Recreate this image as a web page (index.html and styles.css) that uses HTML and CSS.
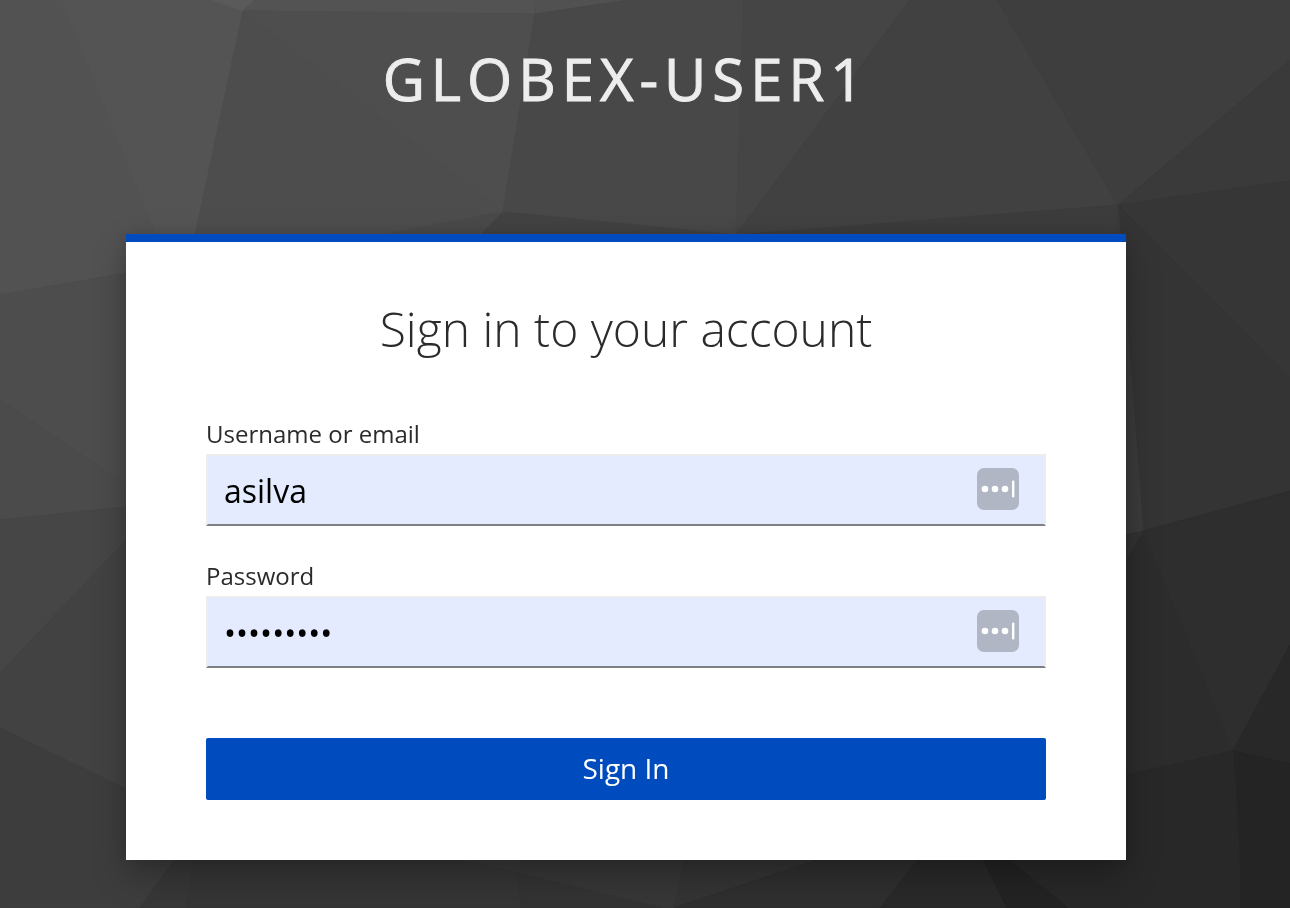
FILE: index.html
```html
<!DOCTYPE html>
<html lang="en">
<head>
<meta charset="utf-8">
<meta name="viewport" content="width=device-width, initial-scale=1">
<title>Sign in to globex-user1</title>
<link rel="stylesheet" href="styles.css">
</head>
<body>
<svg class="backdrop" viewBox="0 0 1290 908" preserveAspectRatio="xMidYMid slice" aria-hidden="true">
  <path color="#3c3c3c" d="M0 0H1290V908H0Z"/>
  <path color="#525252" d="M0 0H62L168 265L126 273L0 295Z"/>
  <path color="#545454" d="M62 0H212L243 11L195 234L190 262L168 265Z"/>
  <path color="#5a5a5a" d="M212 0H255L243 11Z"/>
  <path color="#535353" d="M255 0H534L535 14L243 11Z"/>
  <path color="#515151" d="M534 0H628L535 14Z"/>
  <path color="#4d4d4d" d="M243 11L503 212L380 235H195Z"/>
  <path color="#4e4e4e" d="M243 11L535 14L503 212Z"/>
  <path color="#484848" d="M628 0H744L736 235L503 212L535 14Z"/>
  <path color="#454545" d="M744 0H910L736 235Z"/>
  <path color="#414141" d="M910 0H997L1118 205L736 235Z"/>
  <path color="#3e3e3e" d="M997 0H1290V60L1118 205Z"/>
  <path color="#3a3a3a" d="M1290 60V181L1118 205Z"/>
  <path color="#494949" d="M503 212L475 240H380V235Z"/>
  <path color="#424242" d="M503 212L736 235V240H475Z"/>
  <path color="#3c3c3c" d="M736 235L1118 205L1121 240H736Z"/>
  <path color="#363636" d="M1118 205L1290 181V378Z"/>
  <path color="#343434" d="M1118 205L1290 378V491L1143 531Z"/>
  <path color="#3b3b3b" d="M1118 205L1143 531L1100 540Z"/>
  <path color="#2e2e2e" d="M1143 531L1290 491V645L1233 751Z"/>
  <path color="#2c2c2c" d="M1143 531L1233 751L1100 781V602Z"/>
  <path color="#323232" d="M1143 531L1100 602V541Z"/>
  <path color="#282828" d="M1290 645V764L1233 751Z"/>
  <path color="#242424" d="M1233 751L1290 764V908H1240L1239 840Z"/>
  <path color="#282828" d="M1233 751L1239 840L1240 908H1068L1000 852L1100 781Z"/>
  <path color="#4d4d4d" d="M0 295L190 262V528L0 400Z"/>
  <path color="#4b4b4b" d="M0 400L190 528L126 507L0 520Z"/>
  <path color="#464646" d="M0 520L190 501V476L0 673Z"/>
  <path color="#464646" d="M0 520L126 507L190 486L126 540L0 673Z"/>
  <path color="#424242" d="M0 673L126 540L190 476V820L0 728Z"/>
  <path color="#3d3d3d" d="M0 728L126 789L210 830L175 860L140 908H0Z"/>
  <path color="#373737" d="M178 855H194L187 908H140Z"/>
  <path color="#353535" d="M194 855H435L517 872L521 908H187Z"/>
  <path color="#383838" d="M435 855H520L517 872Z"/>
  <path color="#333333" d="M517 872L665 908H521Z"/>
  <path color="#373737" d="M520 855H686L674 908H665L517 872Z"/>
  <path color="#343434" d="M686 855H832L674 908Z"/>
  <path color="#2f2f2f" d="M832 855H922L880 908H674Z"/>
  <path color="#292929" d="M922 855H981L1007 908H880Z"/>
  <path color="#232323" d="M981 855H1003L1068 908H1007Z"/>
</svg>
<div class="page">
  <header class="realm">globex-user1</header>
  <main class="card">
    <h1 class="card-title">Sign in to your account</h1>
    <form class="form">
      <div class="field">
        <label class="label" for="username">Username or email</label>
        <div class="control">
          <input class="input" id="username" type="text" value="asilva">
          <button class="fill" type="button" aria-label="Fill username">
            <svg viewBox="0 0 42 42" width="42" height="42" aria-hidden="true"><rect width="42" height="42" rx="7" fill="#b0b6c3"/><g fill="#fff"><circle cx="8" cy="21" r="3.3"/><circle cx="18" cy="21" r="3.3"/><circle cx="28" cy="21" r="3.3"/><rect x="35" y="12.5" width="2.4" height="17" rx="1"/></g></svg>
          </button>
        </div>
      </div>
      <div class="field">
        <label class="label" for="password">Password</label>
        <div class="control">
          <input class="input" id="password" type="password" value="password1">
          <button class="fill" type="button" aria-label="Fill password">
            <svg viewBox="0 0 42 42" width="42" height="42" aria-hidden="true"><rect width="42" height="42" rx="7" fill="#b0b6c3"/><g fill="#fff"><circle cx="8" cy="21" r="3.3"/><circle cx="18" cy="21" r="3.3"/><circle cx="28" cy="21" r="3.3"/><rect x="35" y="12.5" width="2.4" height="17" rx="1"/></g></svg>
          </button>
        </div>
      </div>
      <button class="submit" type="submit">Sign In</button>
    </form>
  </main>
</div>
</body>
</html>
```
FILE: styles.css
```css
* {
  box-sizing: border-box;
}

body {
  margin: 0;
  background: #3c3c3c;
  color: #2b2b2b;
  font-family: "Open Sans", "Noto Sans", sans-serif;
}

.backdrop {
  position: fixed;
  inset: 0;
  z-index: -1;
  width: 100%;
  height: 100%;
}

/* The matching stroke closes the seams between neighbouring facets. */
.backdrop path {
  fill: currentColor;
  stroke: currentColor;
  stroke-width: 1px;
}

.page {
  display: flex;
  flex-direction: column;
  align-items: center;
  min-height: 100vh;
  padding: 44px 38px 48px 0;
}

.realm {
  margin-bottom: 120px;
  color: #ededed;
  font-size: 58px;
  line-height: 70px;
  letter-spacing: 6px;
  text-transform: uppercase;
  -webkit-text-stroke: 1px currentColor;
}

.card {
  width: 100%;
  max-width: 1000px;
  padding: 56px 80px 60px;
  border-top: 8px solid #004cbf;
  background: #fff;
  box-shadow: 0 16px 32px rgba(3, 3, 3, 0.25), 0 0 16px rgba(3, 3, 3, 0.12);
}

.card-title {
  margin: 0 0 58px;
  font-size: 48px;
  font-weight: 300;
  line-height: 62px;
  text-align: center;
}

.form {
  display: flex;
  flex-direction: column;
  gap: 34px;
}

.field {
  display: flex;
  flex-direction: column;
  gap: 4px;
}

.label {
  font-size: 24px;
  line-height: 32px;
}

.control {
  position: relative;
}

.input {
  display: block;
  width: 100%;
  height: 72px;
  padding: 0 88px 0 16px;
  border: 2px solid #ededed;
  border-bottom-color: #7d7f82;
  border-radius: 0;
  background: #e5ebfe;
  color: #000;
  font: 32px/48px "Open Sans", "Noto Sans", sans-serif;
}

.fill {
  position: absolute;
  top: 14px;
  right: 27px;
  display: flex;
  padding: 0;
  border: 0;
  background: none;
}

.submit {
  height: 62px;
  margin-top: 36px;
  padding: 0 16px 2px;
  border: 0;
  border-radius: 2px;
  background: #004cbf;
  color: #fff;
  font: 28px/42px "Open Sans", "Noto Sans", sans-serif;
}
```
